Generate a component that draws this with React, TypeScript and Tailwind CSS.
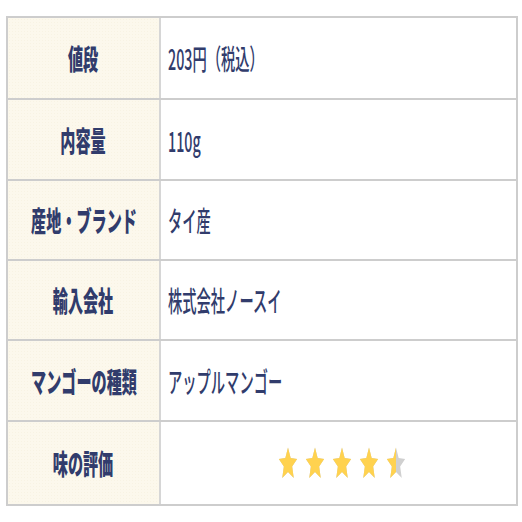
import React from 'react';

interface SpecRow {
    label: string;
    value?: string;
    rating?: number;
    h: string;
}

// 高さは下罫線込み（border-box）
const ROWS: SpecRow[] = [
    { label: '値段', value: '203円（税込）', h: 'h-[82px]' },
    { label: '内容量', value: '110g', h: 'h-[81px]' },
    { label: '産地・ブランド', value: 'タイ産', h: 'h-[80px]' },
    { label: '輸入会社', value: '株式会社ノースイ', h: 'h-[80px]' },
    { label: 'マンゴーの種類', value: 'アップルマンゴー', h: 'h-[81px]' },
    { label: '味の評価', rating: 4.5, h: 'h-[82px]' },
];

const STAR = 'M12 1l3.2 7.3 7.8.6-6 5.2 1.9 7.8L12 17.8 5.1 21.9 7 14.1 1 8.9l7.8-.6z';

// 縦長の星（元画像が横に縮んでいるので合わせる）
const Star = ({ fill }: { fill: number }) => (
    <svg width="20" height="35" viewBox="0 0 24 24" preserveAspectRatio="none">
        <defs>
            <clipPath id={`half-${fill}`}>
                <rect x="0" y="0" width={24 * fill} height="24" />
            </clipPath>
        </defs>
        <path d={STAR} fill="#d0d0d0" />
        <path d={STAR} fill="#ffd24f" clipPath={`url(#half-${fill})`} />
    </svg>
);

const Stars = ({ value }: { value: number }) => (
    <div className="flex items-center justify-center gap-[7px] w-full">
        {[0, 1, 2, 3, 4].map(i => (
            <Star key={i} fill={Math.max(0, Math.min(1, value - i))} />
        ))}
    </div>
);

export default function App() {
    return (
        <div className="w-[522px] h-[522px] bg-white pt-4 pl-[6px]" style={{ fontFamily: '"Noto Sans CJK JP", "Noto Sans", sans-serif' }}>
            <div className="w-[512px] border-2 border-[#cdcdcd] text-[#313c6c]">
                {ROWS.map((row, idx) => (
                    <div
                        key={row.label}
                        className={`flex ${row.h} ${idx < ROWS.length - 1 ? 'border-b-2 border-[#cdcdcd]' : ''}`}
                    >
                        <div className="w-[153px] shrink-0 border-r-2 border-[#d6d6d6] bg-[#fcf8ec] bg-[radial-gradient(#f8f3e3_0.6px,transparent_0.8px)] bg-[length:3px_3px] flex items-center justify-center">
                            <span className="inline-block whitespace-nowrap font-black text-[28px] leading-none scale-x-[0.54]">
                                {row.label}
                            </span>
                        </div>
                        <div className="flex-1 flex items-center pl-[7px]">
                            {row.rating !== undefined ? (
                                <Stars value={row.rating} />
                            ) : (
                                <span className="inline-block whitespace-nowrap font-medium text-[28px] leading-none origin-left scale-x-[0.51]">
                                    {row.value}
                                </span>
                            )}
                        </div>
                    </div>
                ))}
            </div>
        </div>
    );
}
